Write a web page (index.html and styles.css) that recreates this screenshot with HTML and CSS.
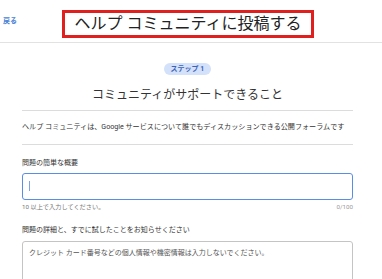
FILE: index.html
```html
<!DOCTYPE html>
<html lang="ja">
<head>
    <meta charset="UTF-8">
    <meta name="viewport" content="width=device-width, initial-scale=1.0">
    <title>ヘルプ コミュニティに投稿する</title>
    <link rel="stylesheet" href="styles.css">
</head>
<body>

    <!-- Header -->
    <div class="header">
        <a class="back" href="#">戻る</a>
        <div class="title-box">
            <h1>ヘルプ コミュニティに投稿する</h1>
        </div>
    </div>

    <div class="container">
        <!-- Step -->
        <div class="step">
            <span class="badge">ステップ 1</span>
            <h2>コミュニティがサポートできること</h2>
        </div>

        <div class="intro">
            <p>ヘルプ コミュニティは、Google サービスについて誰でもディスカッションできる公開フォーラムです</p>
        </div>

        <!-- Summary -->
        <div class="field-group">
            <label>問題の簡単な概要</label>
            <div class="field focused"><span class="caret"></span></div>
            <div class="hint">
                <span>10 以上で入力してください。</span>
                <span>0/100</span>
            </div>
        </div>

        <!-- Details -->
        <div class="field-group details">
            <label>問題の詳細と、すでに試したことをお知らせください</label>
            <div class="field area">
                <p class="placeholder">クレジット カード番号などの個人情報や機密情報は入力しないでください。</p>
            </div>
        </div>
    </div>

</body>
</html>
```

FILE: styles.css
```css
/* General */
body { font-family: Roboto, "Noto Sans CJK JP", sans-serif; background-color: #fff; color: #333; margin: 0; padding: 0; overflow: hidden; }

/* Header */
.header { display: flex; align-items: center; height: 36px; padding-top: 6px; border-bottom: 1px solid #e2e2e2; }
.back { font-size: 7px; color: #4a7fd6; text-decoration: none; font-weight: bold; margin-left: 3px; align-self: flex-start; margin-top: 9px; }
.title-box { width: 246px; height: 22px; border: 3px solid #e0201e; margin-left: 45px; display: flex; align-items: center; justify-content: center; }
.title-box h1 { margin: 0; font-size: 16px; font-weight: normal; color: #222; line-height: 22px; }

/* Content */
.container { width: 331px; margin-left: 22px; }

.step { display: flex; flex-direction: column; align-items: center; padding-top: 20px; padding-bottom: 7px; border-bottom: 1px solid #dcdcdc; }
.badge { height: 12px; line-height: 12px; padding: 0 7px; border-radius: 6px; background-color: #d3e1fa; color: #3d63b3; font-size: 7px; font-weight: bold; }
.step h2 { margin: 12px 0 0; font-size: 12px; line-height: 16px; font-weight: normal; color: #333; }

.intro { padding: 11px 0 12px; border-bottom: 1px solid #dcdcdc; }
.intro p { margin: 0; font-size: 7.1px; line-height: 10px; color: #333; }

/* Fields */
.field-group { margin-top: 13px; }
.field-group label { display: block; font-size: 7px; line-height: 10px; color: #333; margin-bottom: 5px; }
.field { box-sizing: border-box; height: 27px; border: 1px solid #c8c8c8; border-radius: 3px; position: relative; }
.field.focused { border: 1.5px solid #5a8de6; }
.caret { position: absolute; left: 6px; top: 7px; width: 1px; height: 10px; background-color: #7aa3ea; }
.hint { display: flex; justify-content: space-between; font-size: 6.2px; line-height: 8px; color: #777; margin-top: 3px; }
.hint span:last-child { color: #999; }

.details { margin-top: 14px; }
.details label { margin-bottom: 6px; }
.field.area { height: 60px; border-color: #c4c4c4; padding: 6px 6px; }
.placeholder { margin: 0; font-size: 7px; line-height: 10px; color: #555; }
```
